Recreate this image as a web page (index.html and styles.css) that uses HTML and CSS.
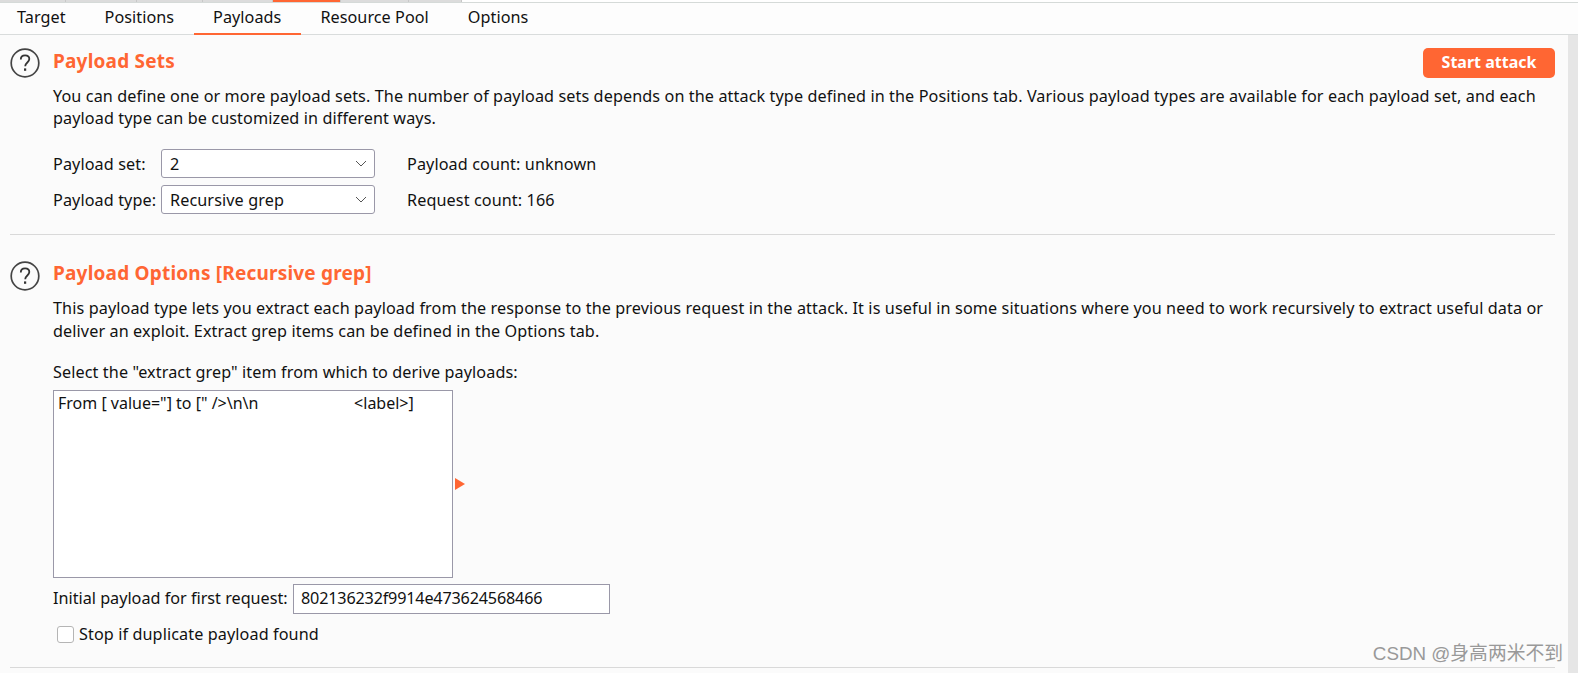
FILE: index.html
```html
<!DOCTYPE html>
<html lang="en">
<head>
    <meta charset="UTF-8">
    <meta name="viewport" content="width=device-width, initial-scale=1.0">
    <title>Intruder Payloads</title>
    <link rel="stylesheet" href="styles.css">
</head>
<body>
    <!-- Strip left over from the tab row above -->
    <div class="top-strip">
        <span class="top-strip-tab"></span>
        <span class="top-strip-tab"></span>
        <span class="top-strip-tab"></span>
        <span class="top-strip-tab"></span>
        <span class="top-strip-tab active"></span>
        <span class="top-strip-tab"></span>
        <span class="top-strip-tab"></span>
    </div>

    <div class="tabs">
        <a class="tab">Target</a>
        <a class="tab">Positions</a>
        <a class="tab active">Payloads</a>
        <a class="tab">Resource Pool</a>
        <a class="tab">Options</a>
    </div>

    <div class="main">
        <div class="content">
            <!-- Payload sets -->
            <section class="panel panel-sets">
                <svg class="help-icon" viewBox="0 0 30 30" width="30" height="30">
                    <circle cx="15" cy="15" r="13.8" fill="none" stroke="#444" stroke-width="1.7"/>
                    <path d="M10.8 11.6c0-2.6 1.9-4.2 4.3-4.2s4.2 1.5 4.2 3.7c0 3.3-4.1 3.5-4.1 7.2" fill="none" stroke="#333" stroke-width="1.8"/>
                    <rect x="14" y="20.4" width="2.2" height="2.4" fill="#333"/>
                </svg>
                <div class="panel-body">
                    <div class="panel-head">
                        <h2 class="panel-title">Payload Sets</h2>
                        <button class="start-btn">Start attack</button>
                    </div>
                    <p class="desc">You can define one or more payload sets. The number of payload sets depends on the attack type defined in the Positions tab. Various payload types are available for each payload set, and each payload type can be customized in different ways.</p>
                    <div class="set-grid">
                        <label>Payload set:</label>
                        <div class="select"><span>2</span><svg class="chevron" viewBox="0 0 12 7" width="12" height="7"><path d="M1 1l5 5 5-5" fill="none" stroke="#555" stroke-width="1"/></svg></div>
                        <span class="count">Payload count: unknown</span>
                        <label>Payload type:</label>
                        <div class="select"><span>Recursive grep</span><svg class="chevron" viewBox="0 0 12 7" width="12" height="7"><path d="M1 1l5 5 5-5" fill="none" stroke="#555" stroke-width="1"/></svg></div>
                        <span class="count">Request count: 166</span>
                    </div>
                </div>
            </section>

            <!-- Payload options -->
            <section class="panel panel-options">
                <svg class="help-icon" viewBox="0 0 30 30" width="30" height="30">
                    <circle cx="15" cy="15" r="13.8" fill="none" stroke="#444" stroke-width="1.7"/>
                    <path d="M10.8 11.6c0-2.6 1.9-4.2 4.3-4.2s4.2 1.5 4.2 3.7c0 3.3-4.1 3.5-4.1 7.2" fill="none" stroke="#333" stroke-width="1.8"/>
                    <rect x="14" y="20.4" width="2.2" height="2.4" fill="#333"/>
                </svg>
                <div class="panel-body">
                    <h2 class="panel-title">Payload Options [Recursive grep]</h2>
                    <p class="desc desc-options">This payload type lets you extract each payload from the response to the previous request in the attack. It is useful in some situations where you need to work recursively to extract useful data or deliver an exploit. Extract grep items can be defined in the Options tab.</p>
                    <div class="list-label">Select the "extract grep" item from which to derive payloads:</div>
                    <div class="list-row">
                        <div class="list-box">From [ value="] to [" /&gt;\n\n                       &lt;label&gt;]</div>
                        <span class="arrow"></span>
                    </div>
                    <div class="initial-row">
                        <label class="initial-label">Initial payload for first request:</label>
                        <div class="text-input">802136232f9914e473624568466</div>
                    </div>
                    <div class="check-row">
                        <span class="checkbox"></span>
                        <span>Stop if duplicate payload found</span>
                    </div>
                </div>
            </section>
        </div>
        <div class="scrollbar"></div>
    </div>

    <div class="watermark">CSDN @身高两米不到</div>
</body>
</html>
```

FILE: styles.css
```css
/* Reset default margin and padding */
* {
    margin: 0;
    padding: 0;
    box-sizing: border-box;
}

html, body {
    height: 100%;
    overflow: hidden;
}

body {
    position: relative;
    background-color: #fbfbfb;
    color: #111;
    font-family: "Noto Sans", "Open Sans", sans-serif;
    font-size: 16.2px;
    letter-spacing: 0.1px;
    line-height: 22px;
    display: flex;
    flex-direction: column;
}

/* Top strip */
.top-strip {
    display: grid;
    grid-template-columns: 66px 71px 66px 70px 68px 68px 53px 1fr;
    height: 3px;
    background-color: #fff;
    border-bottom: 1px solid #d5dad8;
}

.top-strip-tab {
    height: 2px;
    background-color: #dcdcdc;
    border-right: 1px solid #c8c8c8;
}

.top-strip-tab.active {
    background-color: #ff6633;
}

/* Tabs */
.tabs {
    display: flex;
    height: 32px;
    background-color: #fdfdfd;
    border-bottom: 1px solid #d9dcdc;
}

.tab {
    padding: 0 19.5px;
    height: 32px;
    line-height: 28px;
    letter-spacing: 0.05px;
}

.tab:first-child {
    padding-left: 17px;
}

.tab.active {
    border-bottom: 2px solid #ff6633;
}

/* Main area */
.main {
    flex: 1;
    display: flex;
    min-height: 0;
}

.content {
    flex: 1;
    padding: 0 13px 0 10px;
}

.scrollbar {
    width: 10px;
    background-color: #e6e6e6;
}

.panel {
    display: flex;
    gap: 13px;
    border-bottom: 1px solid #d9d9d9;
}

.panel-sets {
    height: 200px;
    padding-top: 13px;
}

.panel-options {
    height: 433px;
    padding-top: 26px;
}

.help-icon {
    flex: none;
}

.panel-body {
    flex: 1;
    min-width: 0;
}

.panel-head {
    display: flex;
    justify-content: space-between;
    height: 30px;
}

.panel-title {
    color: #ff6633;
    font-size: 19px;
    font-weight: 700;
    letter-spacing: 0.2px;
    line-height: 24px;
}

.panel-head .panel-title {
    line-height: 26px;
}

.start-btn {
    width: 132px;
    height: 30px;
    padding-bottom: 2px;
    background-color: #ff6633;
    color: #fff;
    border: none;
    border-radius: 5px;
    font-family: inherit;
    font-size: 16px;
    font-weight: 700;
}

.desc {
    margin-top: 7px;
}

.desc-options {
    margin-top: 12px;
    line-height: 23px;
}

/* Payload set selectors */
.set-grid {
    display: grid;
    grid-template-columns: 108px 214px auto;
    grid-template-rows: 29px 29px;
    row-gap: 7px;
    margin-top: 20px;
    align-items: center;
}

.select {
    display: flex;
    justify-content: space-between;
    align-items: center;
    height: 100%;
    padding: 0 7px 0 8px;
    background-color: #fff;
    border: 1px solid #9a98a8;
    border-radius: 3px;
}

.count {
    margin-left: 32px;
}

/* Extract grep list */
.list-label {
    margin-top: 18px;
}

.list-row {
    display: flex;
    align-items: center;
    margin-top: 7px;
}

.list-box {
    width: 400px;
    height: 188px;
    padding: 1px 4px;
    background-color: #fff;
    border: 1px solid #9a98a8;
    font-size: 16px;
    letter-spacing: 0;
    white-space: pre;
}

.arrow {
    width: 0;
    height: 0;
    margin-left: 2px;
    border-left: 10px solid #ff6633;
    border-top: 6px solid transparent;
    border-bottom: 6px solid transparent;
}

.initial-row {
    display: flex;
    align-items: center;
    margin-top: 6px;
}

.initial-label {
    width: 240px;
    padding-bottom: 2px;
    letter-spacing: 0;
}

.text-input {
    width: 317px;
    height: 30px;
    padding: 0 7px;
    line-height: 27px;
    letter-spacing: -0.18px;
    background-color: #fff;
    border: 1px solid #9a98a8;
}

.check-row {
    display: flex;
    align-items: center;
    gap: 5px;
    margin-top: 9px;
    margin-left: 4px;
}

.checkbox {
    width: 17px;
    height: 17px;
    background-color: #fff;
    border: 1px solid #b5b5b5;
    border-radius: 3px;
}

.watermark {
    position: absolute;
    right: 15px;
    bottom: 8px;
    color: #999;
    font-family: "Liberation Sans", "Noto Sans CJK SC", sans-serif;
    font-size: 18.8px;
    letter-spacing: 0;
}
```
